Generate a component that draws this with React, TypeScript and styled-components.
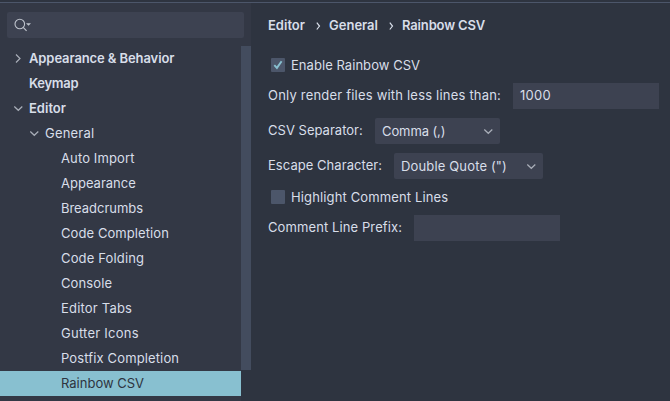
import React from 'react';
import styled, { createGlobalStyle } from 'styled-components';

const Global = createGlobalStyle`
  * { box-sizing: border-box; }
  html, body, #root { height: 100%; margin: 0; }
  body {
    overflow: hidden;
    background: #2e3440;
    color: #d8dee9;
    font: 400 13px/25px Inter, 'Liberation Sans', sans-serif;
    letter-spacing: 0.3px;
    white-space: nowrap;
  }
`;

const Window = styled.div`
  display: flex;
  flex-direction: column;
  height: 401px;
  width: 670px;
`;

const TopEdge = styled.div`
  flex: none;
  height: 3px;
  border-bottom: 1px solid #4c566a;
`;

const Body = styled.div`
  display: flex;
  flex: 1;
  min-height: 0;
`;

const Sidebar = styled.aside`
  display: flex;
  flex-direction: column;
  width: 251px;
  background: #333845;
`;

const Search = styled.div`
  display: flex;
  flex: none;
  align-items: center;
  width: 237px;
  height: 26px;
  margin: 9px 7px 8px;
  padding-left: 7px;
  border-radius: 2px;
  background: #3d4251;
`;

const TreeArea = styled.div`
  display: flex;
  flex: 1;
`;

const Tree = styled.div`
  width: 241px;
`;

const ScrollTrack = styled.div`
  width: 10px;
  background: #2e3440;
`;

const ScrollThumb = styled.div`
  height: 324px;
  background: #434c5e;
`;

const TreeRow = styled.div<{ $depth: number; $bold?: boolean; $selected?: boolean; $spacing: number }>`
  display: flex;
  align-items: center;
  height: 25px;
  padding-left: ${p => 13 + p.$depth * 16}px;
  font-weight: ${p => (p.$bold ? 600 : 400)};
  letter-spacing: ${p => p.$spacing}px;
  color: ${p => (p.$selected ? '#2e3440' : '#d8dee9')};
  background: ${p => (p.$selected ? '#88c0d0' : 'transparent')};
`;

const Toggle = styled.span`
  display: flex;
  flex: none;
  width: 16px;
`;

const Panel = styled.main`
  flex: 1;
  padding: 10px 0 0 17px;
`;

const Breadcrumbs = styled.nav`
  display: flex;
  align-items: center;
  height: 25px;
  font-weight: 600;
  letter-spacing: 0;
`;

const Crumb = styled.span<{ $width: number; $spacing?: number }>`
  width: ${p => p.$width}px;
  letter-spacing: ${p => p.$spacing ?? 0}px;
`;

const Separator = styled.span`
  display: flex;
  width: 13px;
`;

const Field = styled.div<{ $top: number; $height: number }>`
  display: flex;
  align-items: center;
  height: ${p => p.$height}px;
  margin-top: ${p => p.$top}px;
`;

const Label = styled.label<{ $width?: number; $spacing: number }>`
  width: ${p => (p.$width ? `${p.$width}px` : 'auto')};
  padding-bottom: ${p => (p.$width ? 1 : 0)}px;
  letter-spacing: ${p => p.$spacing}px;
`;

const TextBox = styled.div`
  width: 146px;
  height: 26px;
  padding-left: 7px;
  background: #3d4251;
`;

const Select = styled.div<{ $width: number; $spacing: number }>`
  display: flex;
  align-items: center;
  justify-content: space-between;
  width: ${p => p.$width}px;
  height: 26px;
  padding: 1px 6px 0 7px;
  border-radius: 2px;
  letter-spacing: ${p => p.$spacing}px;
  background: #3d4251;
`;

const CheckBox = styled.span`
  display: flex;
  width: 14px;
  height: 14px;
  margin: 0 6px 0 3px;
  border-radius: 1px;
  background: #4c566a;
`;

const Chevron = ({ right = false }: { right?: boolean }) => (
  <svg width="11" height="11" viewBox="0 0 11 11" fill="none" stroke="#a9aeb8" strokeWidth="1.2">
    <path d={right ? 'M3 1.5 L7 5.5 L3 9.5' : 'M1.3 3.5 L5.3 7.3 L9.3 3.5'} />
  </svg>
);

const CrumbArrow = () => (
  <svg width="5" height="9" viewBox="0 0 5 9" fill="none" stroke="#d8dee9" strokeWidth="1.2">
    <path d="M.8 1.7 L3.5 5.1 L.8 8.5" />
  </svg>
);

const SearchIcon = () => (
  <svg width="18" height="14" viewBox="0 0 18 14" fill="none">
    <circle cx="5.8" cy="6" r="4.8" stroke="#bfc4cd" strokeWidth="1.1" />
    <path d="M9.2 9.4 L12.6 12.8" stroke="#bfc4cd" strokeWidth="1.2" />
    <path d="M12 5.2 H17 L14.5 7.8 Z" fill="#bfc4cd" />
  </svg>
);

const CheckMark = () => (
  <svg width="14" height="14" viewBox="0 0 14 14" fill="none" stroke="#88c0d0" strokeWidth="1.9">
    <path d="M3.3 7.2 L5.9 9.9 L10.6 3.2" />
  </svg>
);

type Item = {
  text: string;
  depth: number;
  spacing: number;
  bold?: boolean;
  arrow?: 'right' | 'down';
  selected?: boolean;
};

const items: Item[] = [
  { text: 'Appearance & Behavior', depth: 0, spacing: -0.1, bold: true, arrow: 'right' },
  { text: 'Keymap', depth: 0, spacing: -0.3, bold: true },
  { text: 'Editor', depth: 0, spacing: 0, bold: true, arrow: 'down' },
  { text: 'General', depth: 1, spacing: 0.2, arrow: 'down' },
  { text: 'Auto Import', depth: 2, spacing: 0.12 },
  { text: 'Appearance', depth: 2, spacing: 0 },
  { text: 'Breadcrumbs', depth: 2, spacing: -0.03 },
  { text: 'Code Completion', depth: 2, spacing: 0.08 },
  { text: 'Code Folding', depth: 2, spacing: 0.15 },
  { text: 'Console', depth: 2, spacing: 0.1 },
  { text: 'Editor Tabs', depth: 2, spacing: 0.2 },
  { text: 'Gutter Icons', depth: 2, spacing: 0.25 },
  { text: 'Postfix Completion', depth: 2, spacing: 0.13 },
  { text: 'Rainbow CSV', depth: 2, spacing: 0 , selected: true },
];

export default function App() {
  return (
    <>
      <Global />
      <Window>
        <TopEdge />
        <Body>
          <Sidebar>
            <Search><SearchIcon /></Search>
            <TreeArea>
              <Tree>
                {items.map(item => (
                  <TreeRow
                    key={item.text}
                    $depth={item.depth}
                    $bold={item.bold}
                    $selected={item.selected}
                    $spacing={item.spacing}
                  >
                    <Toggle>{item.arrow && <Chevron right={item.arrow === 'right'} />}</Toggle>
                    {item.text}
                  </TreeRow>
                ))}
              </Tree>
              <ScrollTrack><ScrollThumb /></ScrollTrack>
            </TreeArea>
          </Sidebar>
          <Panel>
            <Breadcrumbs>
              <Crumb $width={48}>Editor</Crumb>
              <Separator><CrumbArrow /></Separator>
              <Crumb $width={60}>General</Crumb>
              <Separator><CrumbArrow /></Separator>
              <Crumb $width={90} $spacing={-0.15}>Rainbow CSV</Crumb>
            </Breadcrumbs>
            <Field $top={20} $height={14}>
              <CheckBox><CheckMark /></CheckBox>
              <Label $spacing={0.05}>Enable Rainbow CSV</Label>
            </Field>
            <Field $top={11} $height={26}>
              <Label $width={245} $spacing={0.2}>Only render files with less lines than:</Label>
              <TextBox>1000</TextBox>
            </Field>
            <Field $top={9} $height={26}>
              <Label $width={107} $spacing={0.02}>CSV Separator:</Label>
              <Select $width={125} $spacing={-0.1}>Comma (,)<Chevron /></Select>
            </Field>
            <Field $top={9} $height={26}>
              <Label $width={126} $spacing={0.05}>Escape Character:</Label>
              <Select $width={149} $spacing={0.15}>Double Quote (")<Chevron /></Select>
            </Field>
            <Field $top={11} $height={14}>
              <CheckBox />
              <Label $spacing={0.13}>Highlight Comment Lines</Label>
            </Field>
            <Field $top={11} $height={26}>
              <Label $width={146} $spacing={0.1}>Comment Line Prefix:</Label>
              <TextBox />
            </Field>
          </Panel>
        </Body>
      </Window>
    </>
  );
}
